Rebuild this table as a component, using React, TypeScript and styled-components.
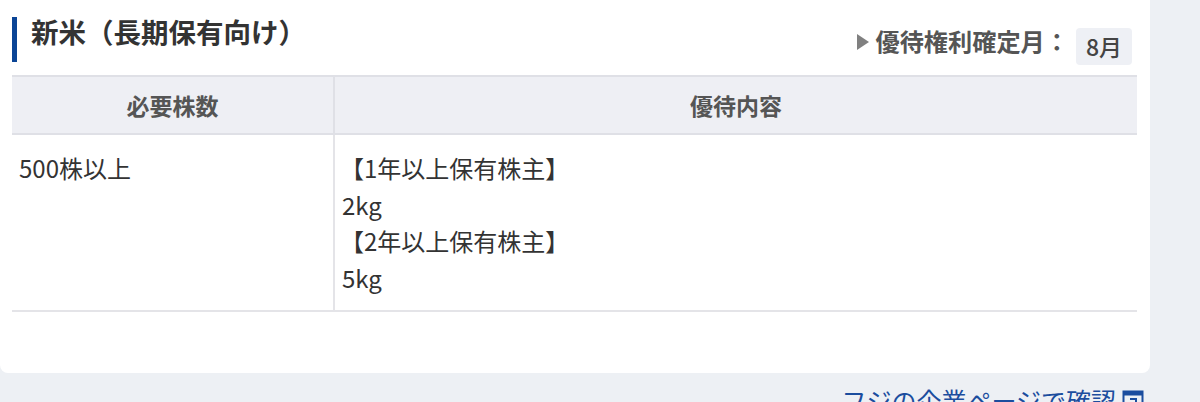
import React from "react";
import styled, { createGlobalStyle } from "styled-components";

const Global = createGlobalStyle`
  html, body { margin: 0; padding: 0; background: #edf0f4; }
  body { font-family: "Noto Sans CJK JP", "Noto Sans", sans-serif; overflow: hidden; }
  * { box-sizing: border-box; }
`;

const Page = styled.div`
  width: 1200px;
  height: 402px;
  background: #edf0f4;
  overflow: hidden;
`;

const Card = styled.section`
  width: 1150px;
  background: #ffffff;
  border-radius: 0 0 8px 8px;
  padding: 17px 13px 61px 12px;
`;

const HeadRow = styled.div`
  display: flex;
  justify-content: space-between;
  align-items: flex-start;
  height: 58px;
`;

const Title = styled.h2`
  margin: 0;
  border-left: 5px solid #0b4596;
  padding: 0 0 17px 14px;
  font-size: 27.5px;
  line-height: 28px;
  font-weight: 700;
  color: #333333;
`;

const RightInfo = styled.div`
  display: flex;
  align-items: center;
  margin-top: 9px;
  margin-right: 5px;
`;

const Triangle = styled.span`
  width: 0;
  height: 0;
  border-top: 8px solid transparent;
  border-bottom: 8px solid transparent;
  border-left: 12px solid #808080;
  margin-right: 6px;
  margin-bottom: 9px;
`;

const Label = styled.span`
  font-size: 24.2px;
  line-height: 30px;
  font-weight: 700;
  color: #555555;
  margin-bottom: 10px;
`;

const Badge = styled.span`
  display: inline-flex;
  align-items: center;
  justify-content: center;
  width: 56px;
  height: 37px;
  margin-left: 7px;
  background: #eef0f5;
  border-radius: 4px;
  font-size: 23px;
  font-weight: 500;
  color: #444444;
`;

const Table = styled.table`
  width: 100%;
  border-collapse: collapse;
  table-layout: fixed;
`;

const Th = styled.th<{ $w?: number }>`
  width: ${(p) => (p.$w ? `${p.$w}px` : "auto")};
  background: #eeeff4;
  border-top: 2px solid #dfe0e6;
  border-bottom: 2px solid #dfe0e6;
  & + & { border-left: 2px solid #dfe0e6; }
  padding: 10px 8px 10px;
  font-size: 23px;
  line-height: 36px;
  font-weight: 700;
  color: #555555;
  text-align: center;
`;

const Td = styled.td`
  vertical-align: top;
  border-bottom: 2px solid #e4e4e8;
  & + & { border-left: 2px solid #e4e4e8; }
  padding: 15px 8px 14px 7px;
  font-size: 24px;
  line-height: 36.5px;
  color: #333333;
`;

const Line = styled.div<{ $bracket?: boolean }>`
  margin-left: ${(p) => (p.$bracket ? "-2px" : "0")};
`;

const LinkRow = styled.div`
  display: flex;
  justify-content: flex-end;
  padding-right: 56px;
  margin-top: 9px;
`;

const Link = styled.a`
  display: inline-flex;
  align-items: center;
  gap: 6px;
  font-size: 25px;
  line-height: 37px;
  color: #1b4d9e;
  text-decoration: none;
`;

const ExtIcon = () => (
  <svg width="22" height="22" viewBox="0 0 22 22" fill="none">
    <rect x="1.5" y="1.5" width="19" height="19" stroke="#1b4d9e" strokeWidth="2" />
    <rect x="1.5" y="1.5" width="19" height="4" fill="#1b4d9e" />
    <path d="M8 9h6v6" stroke="#1b4d9e" strokeWidth="2" />
  </svg>
);

export default function App() {
  return (
    <Page>
      <Global />
      <Card>
        <HeadRow>
          <Title>新米（長期保有向け）</Title>
          <RightInfo>
            <Triangle />
            <Label>優待権利確定月：</Label>
            <Badge>8月</Badge>
          </RightInfo>
        </HeadRow>
        <Table>
          <thead>
            <tr>
              <Th $w={322}>必要株数</Th>
              <Th>優待内容</Th>
            </tr>
          </thead>
          <tbody>
            <tr>
              <Td>500株以上</Td>
              <Td>
                <Line $bracket>【1年以上保有株主】</Line>
                <Line>2kg</Line>
                <Line $bracket>【2年以上保有株主】</Line>
                <Line>5kg</Line>
              </Td>
            </tr>
          </tbody>
        </Table>
      </Card>
      <LinkRow>
        <Link href="#">
          フジの企業ページで確認
          <ExtIcon />
        </Link>
      </LinkRow>
    </Page>
  );
}
